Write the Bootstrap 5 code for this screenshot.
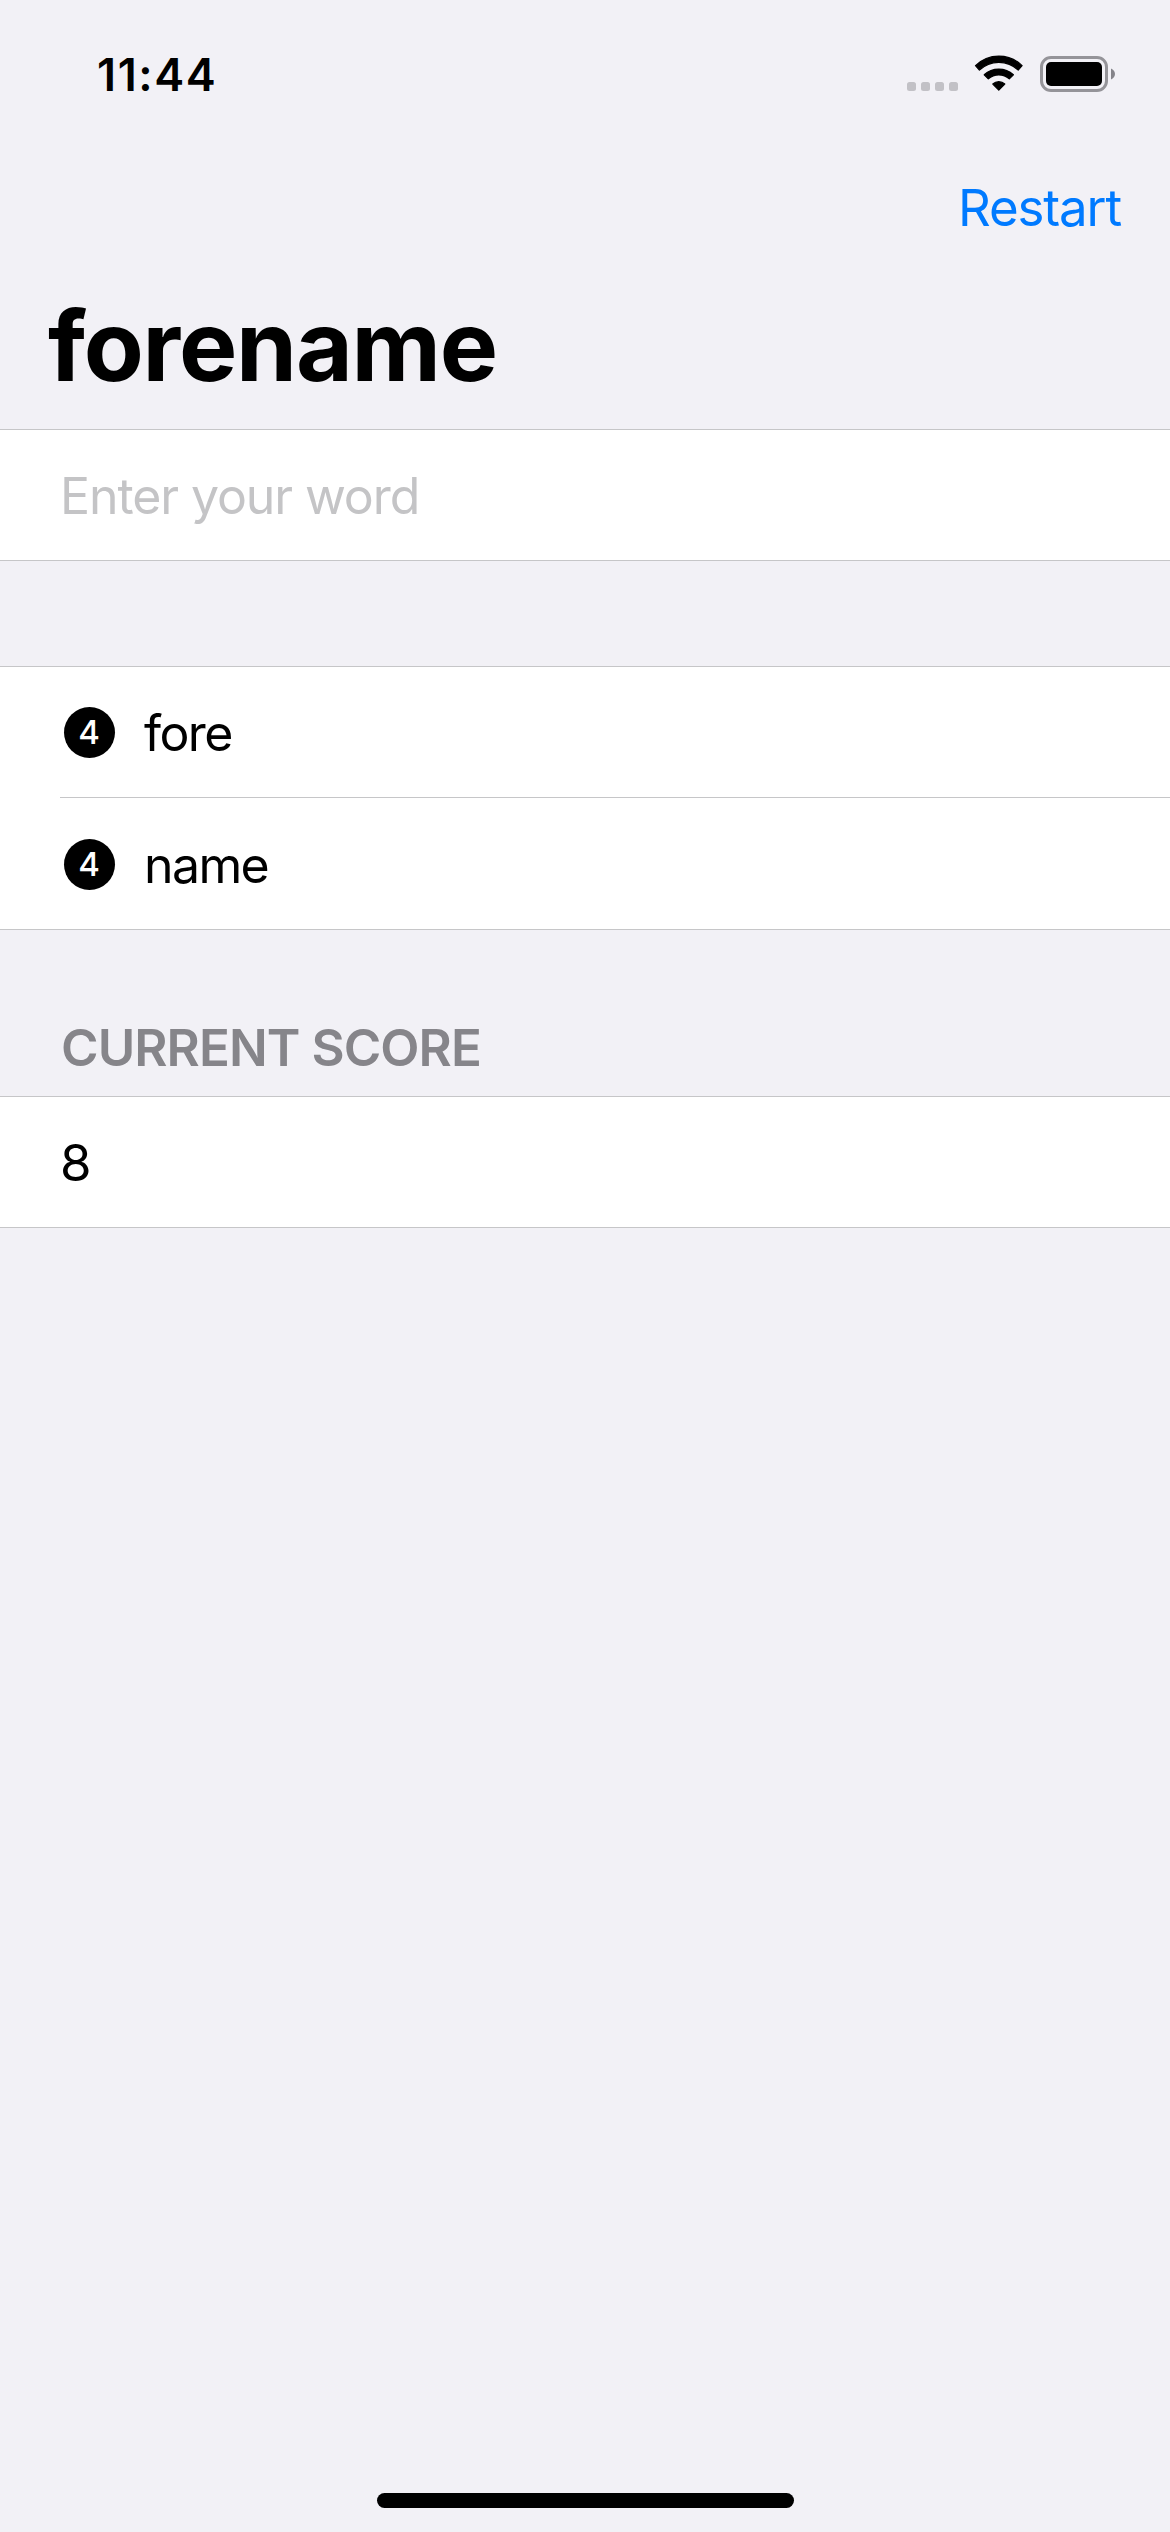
<!DOCTYPE html>
<html lang="en">
<head>
<meta charset="utf-8">
<meta name="viewport" content="width=device-width, initial-scale=1">
<title>Word Scramble</title>
<link href="https://cdn.jsdelivr.net/npm/bootstrap@5.3.0/dist/css/bootstrap.min.css" rel="stylesheet">
<style>
  body { background: #f2f1f6; color: #000; font-family: Inter, "Liberation Sans", sans-serif; font-size: 51px; line-height: 61px; }
  .screen { height: 2532px; }
  .status-bar { height: 141px; padding: 43px 54px 0 97px; }
  .clock { font-size: 45px; font-weight: 600; line-height: 63px; letter-spacing: 1.6px; }
  .status-icons { width: 211px; height: 50px; }
  .nav-row { height: 132px; padding: 1px 49px 0; }
  .restart { color: #007aff; letter-spacing: -1.15px; }
  .page-title { height: 156px; padding: 0 48px; font-size: 98px; font-weight: 700; line-height: 145px; letter-spacing: -1.2px; }
  .cells { background: #fff; border-top: 1px solid #c6c6c8; border-bottom: 1px solid #c6c6c8; }
  .cell { height: 130px; padding-left: 60px; padding-top: 1px; }
  .cell-input, .cell-last { padding-top: 2px; }
  .cell-last { height: 131px; }
  .word-input, .word-input:focus { height: 60px; background: none; box-shadow: none; color: #000; font-size: 50px; line-height: 60px; letter-spacing: -1.1px; }
  .word-input::placeholder { color: #c4c4c6; opacity: 1; }
  .rule { height: 1px; margin-left: 60px; background: #c6c6c8; }
  .gap-block { height: 105px; }
  .count-icon { width: 51px; height: 51px; margin-left: 4px; margin-right: 29px; padding-right: 1px; background: #000; color: #fff; font-size: 33px; font-weight: 500; line-height: 41px; }
  .word { padding-top: 1px; font-size: 50px; line-height: 60px; letter-spacing: -1.6px; }
  .section-head { height: 166px; padding: 87px 0 0 61px; color: #86858a; font-size: 51px; font-weight: 600; line-height: 61px; letter-spacing: -.92px; }
  .home-bar { width: 417px; height: 15px; margin-bottom: 24px; background: #000; }
</style>
</head>
<body>
<div class="screen d-flex flex-column overflow-hidden">
  <header>
    <div class="status-bar d-flex justify-content-between">
      <span class="clock">11:44</span>
      <svg class="status-icons" viewBox="0 0 211 50" aria-hidden="true">
        <g fill="#c2c1c6"><rect x="2" y="39" width="9" height="9" rx="2.5"/><rect x="16" y="39" width="9" height="9" rx="2.5"/><rect x="30" y="39" width="9" height="9" rx="2.5"/><rect x="44" y="39" width="9" height="9" rx="2.5"/></g>
        <g stroke="#000" stroke-width="1.2" stroke-linejoin="round">
          <path d="M70.5 22.7A33 33 0 0 1 117.1 22.7L113.2 27.1A28 28 0 0 0 74.4 27.1Z"/>
          <path d="M79.2 31.8A21.4 21.4 0 0 1 108.4 31.8L104.3 35.9A16 16 0 0 0 83.3 35.9Z"/>
          <path d="M87.8 41A8.8 8.8 0 0 1 99.8 41L93.8 47.2Z"/>
        </g>
        <rect x="136.5" y="14.5" width="65" height="33" rx="9.5" fill="none" stroke="#959499" stroke-width="3"/>
        <rect x="141" y="19" width="56" height="24" rx="5"/>
        <path d="M206 25.6C208.4 26.6 210 28.6 210 31S208.4 35.4 206 36.4Z" fill="#85848a"/>
      </svg>
    </div>
    <div class="nav-row d-flex align-items-center justify-content-end"><a class="restart text-decoration-none" href="#">Restart</a></div>
    <h1 class="page-title mb-0">forename</h1>
  </header>
  <main class="flex-grow-1">
    <div class="cells">
      <div class="cell cell-input d-flex align-items-center"><input class="word-input form-control border-0 rounded-0 p-0" type="text" placeholder="Enter your word" aria-label="Enter your word"></div>
    </div>
    <div class="gap-block"></div>
    <div class="cells">
      <div class="cell d-flex align-items-center"><span class="count-icon rounded-circle d-flex align-items-center justify-content-center">4</span><span class="word">fore</span></div>
      <div class="rule"></div>
      <div class="cell cell-last d-flex align-items-center"><span class="count-icon rounded-circle d-flex align-items-center justify-content-center">4</span><span class="word">name</span></div>
    </div>
    <h2 class="section-head mb-0">CURRENT SCORE</h2>
    <div class="cells"><div class="cell d-flex align-items-center"><span>8</span></div></div>
  </main>
  <div class="home-bar rounded-pill mx-auto"></div>
</div>
<script src="https://cdn.jsdelivr.net/npm/bootstrap@5.3.0/dist/js/bootstrap.bundle.min.js"></script>
</body>
</html>
